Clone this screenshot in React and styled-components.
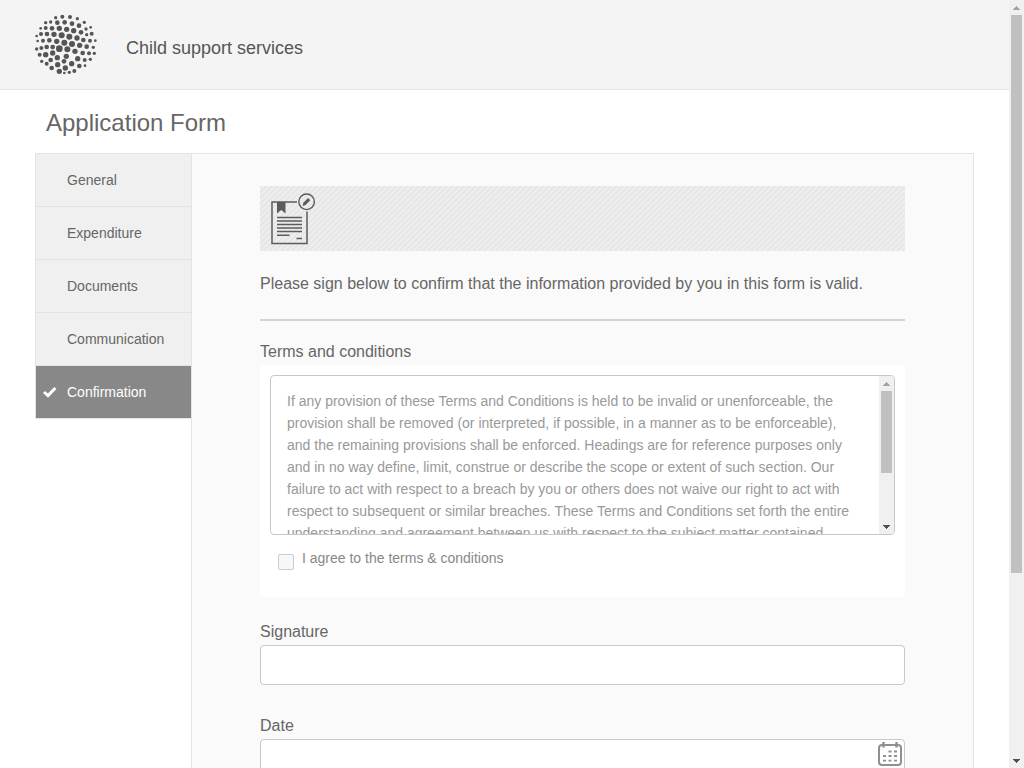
import React from "react";
import styled, { createGlobalStyle, css } from "styled-components";

const GlobalStyle = createGlobalStyle`
  *, *::before, *::after { box-sizing: border-box; }
  html, body { margin: 0; height: 100%; overflow: hidden; }
  body {
    background: #fff;
    color: #666;
    font-family: "Liberation Sans", Arial, sans-serif;
    font-size: 16px;
  }
`;

const Viewport = styled.div`
  display: flex;
  height: 100vh;
`;

const Page = styled.div`
  flex: 1;
  min-width: 0;
  overflow-y: auto;
  scrollbar-width: none;
`;

const Track = styled.div`
  flex: none;
  display: flex;
  flex-direction: column;
  align-items: center;
  justify-content: space-between;
  width: 15px;
  background: #f0f0f0;
`;

const Thumb = styled.div`
  width: 11px;
  height: ${(p) => p.$size};
  margin-bottom: auto;
  background: #c0c0c0;
`;

const Arrow = styled.svg`
  flex: none;
  display: block;
  width: 15px;
  height: 15px;
  fill: ${(p) => (p.$muted ? "#a3a3a3" : "#505050")};
`;

function ScrollBar({ size }) {
  return (
    <Track aria-hidden="true">
      <Arrow $muted viewBox="0 0 15 15" shapeRendering="crispEdges">
        <path d="M7 6h1v1h1v1h1v1h1v1H4V9h1V8h1V7h1z" />
      </Arrow>
      <Thumb $size={size} />
      <Arrow viewBox="0 0 15 15" shapeRendering="crispEdges">
        <path d="M4 6h7v1h-1v1H9v1H8v1H7V9H6V8H5V7H4z" />
      </Arrow>
    </Track>
  );
}

const Header = styled.header`
  display: flex;
  align-items: center;
  gap: 28px;
  height: 90px;
  padding: 0 34px;
  background: #f4f4f4;
  border-bottom: 1px solid #e4e4e4;
`;

const Logo = styled.svg`
  width: 64px;
  height: 64px;
  fill: #555;
`;

const Brand = styled.div`
  padding-top: 6px;
  color: #555;
  font-size: 18px;
  line-height: 22px;
`;

const DOTS = [
  [77, 24, 5], [97, 21, 6], [120, 22, 6], [142, 27, 5],
  [47, 39, 5], [62, 37, 5], [82, 39, 7], [104, 38, 7], [126, 42, 7], [147, 48, 7], [163, 38, 5],
  [32, 56, 4], [47, 55, 6], [66, 56, 7], [88, 56, 8], [110, 59, 8], [131, 63, 8], [153, 68, 7], [168, 58, 5], [182, 53, 4],
  [20, 79, 4], [33, 73, 6], [51, 73, 7], [72, 74, 8], [95, 77, 9], [118, 81, 9], [141, 85, 8], [160, 91, 7], [170, 75, 5], [185, 72, 6],
  [23, 94, 4], [39, 93, 6], [58, 92, 7], [80, 95, 8], [103, 99, 9], [126, 103, 9], [149, 107, 8], [170, 111, 7], [180, 93, 6], [196, 93, 4],
  [20, 118, 5], [34, 115, 6], [50, 112, 7], [68, 112, 7], [88, 117, 10], [112, 119, 9], [135, 125, 8], [158, 130, 7], [177, 131, 6], [190, 113, 5], [193, 131, 5],
  [29, 135, 6], [47, 135, 8], [68, 130, 8], [109, 140, 8], [82, 144, 8], [143, 147, 8], [164, 151, 6], [181, 149, 5],
  [35, 155, 5], [50, 162, 6], [62, 151, 7], [102, 155, 7], [125, 162, 8], [148, 169, 7], [165, 168, 4],
  [65, 175, 7], [83, 165, 8], [106, 175, 8], [88, 185, 8], [103, 190, 4], [118, 188, 5], [133, 184, 6],
];

const Title = styled.h1`
  margin: 0;
  padding: 18px 46px 16px;
  font-size: 24px;
  font-weight: normal;
  line-height: 29px;
`;

const Layout = styled.div`
  display: grid;
  grid-template-columns: 156px minmax(0, 1fr);
  align-items: start;
  margin: 0 35px 40px;
`;

const Nav = styled.nav`
  display: flex;
  flex-direction: column;
  border: 1px solid #e4e4e4;
  border-width: 1px 0 0 1px;
`;

const NavItem = styled.a`
  display: flex;
  align-items: center;
  height: 53px;
  padding-left: 7px;
  background: #f0f0f0;
  border-bottom: 1px solid #e4e4e4;
  color: #666;
  font-size: 14px;
  text-decoration: none;
  ${(p) =>
    p.$active &&
    css`
      background: #888;
      color: #fff;
    `}
`;

const NavIcon = styled.span`
  display: flex;
  width: 24px;
`;

const Content = styled.main`
  min-height: 823px;
  padding: 32px 68px;
  background: #fafafa;
  border: 1px solid #e4e4e4;
`;

const Banner = styled.div`
  display: flex;
  height: 65px;
  padding: 7px 11px;
  background: repeating-linear-gradient(135deg, #e6e6e6 0 1px, #eee 2px 3px, #e6e6e6 4px);
`;

const Lead = styled.p`
  margin: 0;
  padding: 22px 0 24px;
  border-bottom: 2px solid #d4d4d4;
  line-height: 22px;
`;

const Field = styled.div`
  display: flex;
  flex-direction: column;
  margin-top: ${(p) => p.$gap}px;
`;

const Label = styled.label`
  margin-bottom: 2px;
  line-height: 22px;
`;

const TermsPanel = styled.div`
  height: 232px;
  padding: 10px;
  background: #fff;
  border-radius: 4px;
`;

const TermsBox = styled.div`
  display: flex;
  height: 160px;
  overflow: hidden;
  background: #fff;
  border: 1px solid #c8c8c8;
  border-radius: 4px;
`;

const TermsText = styled.div`
  flex: 1;
  overflow-y: auto;
  scrollbar-width: none;
  padding: 14px 16px;
  color: #999;
  font-size: 14px;
  line-height: 22px;
  outline: none;
`;

const Agree = styled.label`
  display: flex;
  gap: 8px;
  padding: 12px 8px;
  color: #888;
  font-size: 14px;
  line-height: 22px;
`;

const Checkbox = styled.input`
  appearance: none;
  width: 16px;
  height: 16px;
  margin: 7px 0 0;
  background: #f7f7f7;
  border: 1px solid #ccc;
  border-radius: 2px;
  &:checked { background: #888; }
`;

const InputBox = styled.div`
  display: flex;
  height: 40px;
  padding-right: 2px;
  background: #fff;
  border: 1px solid #c8c8c8;
  border-radius: 4px;
`;

const Input = styled.input`
  flex: 1;
  min-width: 0;
  padding: 0 12px;
  background: transparent;
  border: 0;
  color: #666;
  font: inherit;
  outline: none;
`;

const IconButton = styled.button`
  display: flex;
  align-items: flex-start;
  padding: 2px 0 0;
  background: none;
  border: 0;
`;

const TERMS =
  "If any provision of these Terms and Conditions is held to be invalid or unenforceable, the provision shall be removed (or interpreted, if possible, in a manner as to be enforceable), and the remaining provisions shall be enforced. Headings are for reference purposes only and in no way define, limit, construe or describe the scope or extent of such section. Our failure to act with respect to a breach by you or others does not waive our right to act with respect to subsequent or similar breaches. These Terms and Conditions set forth the entire understanding and agreement between us with respect to the subject matter contained";

const STEPS = ["General", "Expenditure", "Documents", "Communication", "Confirmation"];

function CheckIcon() {
  return (
    <svg width="14" height="12" viewBox="0 0 14 12" fill="none" stroke="#fff" strokeWidth="3">
      <path d="M1 6l4 3.6L12.4 2" />
    </svg>
  );
}

function DocumentIcon() {
  return (
    <svg width="46" height="52" viewBox="0 0 46 52" fill="none" stroke="#5c5c5c" strokeWidth="1.5">
      <path d="M26 9H1v41.600h35V18.500" />
      <path d="M6 24.600h25M6 28h25M6 31.500h25M6 35h25M6 38.500h25M6 42.200h12.500M25.500 45.400H31" />
      <path d="M6 9h8.500v11.500L10.200 17 6 20.500z" fill="#5c5c5c" stroke="none" />
      <circle cx="35.600" cy="8.800" r="7.800" strokeWidth="1.400" />
      <path d="M33.200 11.200L38.200 6.200" strokeWidth="3.200" />
      <path d="M31.600 13l.7-3.200 2.400 2.300z" fill="#5c5c5c" stroke="none" />
    </svg>
  );
}

function CalendarIcon() {
  return (
    <svg width="24" height="25" viewBox="0 0 24 25" fill="none" stroke="#909090">
      <rect x="1" y="3" width="22" height="20" rx="3" strokeWidth="2" />
      <path d="M5.500 0v5.500M18.500 0v5.500" strokeWidth="2.400" />
      <path d="M10.500 9.500h3M16 9.500h3M5 14h3M10.500 14h3M16 14h3M5 18.700h3M10.500 18.700h3M16 18.700h3" strokeWidth="1.800" />
    </svg>
  );
}

export default function App() {
  return (
    <>
      <GlobalStyle />
      <Viewport>
        <Page>
          <Header>
            <Logo viewBox="12 10 192 192" aria-hidden="true">
              {DOTS.map(([x, y, r]) => (
                <circle key={`${x}-${y}`} cx={x} cy={y} r={r} />
              ))}
            </Logo>
            <Brand>Child support services</Brand>
          </Header>
          <Title>Application Form</Title>
          <Layout>
            <Nav>
              {STEPS.map((step) => {
                const active = step === "Confirmation";
                return (
                  <NavItem key={step} href="#" $active={active} aria-current={active ? "step" : undefined}>
                    <NavIcon>{active && <CheckIcon />}</NavIcon>
                    {step}
                  </NavItem>
                );
              })}
            </Nav>
            <Content>
              <Banner>
                <DocumentIcon />
              </Banner>
              <Lead>Please sign below to confirm that the information provided by you in this form is valid.</Lead>
              <Field $gap={20}>
                <Label as="div" id="terms-title">Terms and conditions</Label>
                <TermsPanel>
                  <TermsBox>
                    <TermsText tabIndex={0} role="region" aria-labelledby="terms-title">{TERMS}</TermsText>
                    <ScrollBar size="82px" />
                  </TermsBox>
                  <Agree>
                    <Checkbox type="checkbox" />
                    I agree to the terms &amp; conditions
                  </Agree>
                </TermsPanel>
              </Field>
              <Field $gap={24}>
                <Label htmlFor="signature">Signature</Label>
                <InputBox>
                  <Input id="signature" type="text" />
                </InputBox>
              </Field>
              <Field $gap={30}>
                <Label htmlFor="date">Date</Label>
                <InputBox>
                  <Input id="date" type="text" />
                  <IconButton type="button" aria-label="Choose date">
                    <CalendarIcon />
                  </IconButton>
                </InputBox>
              </Field>
            </Content>
          </Layout>
        </Page>
        <ScrollBar size="558px" />
      </Viewport>
    </>
  );
}
